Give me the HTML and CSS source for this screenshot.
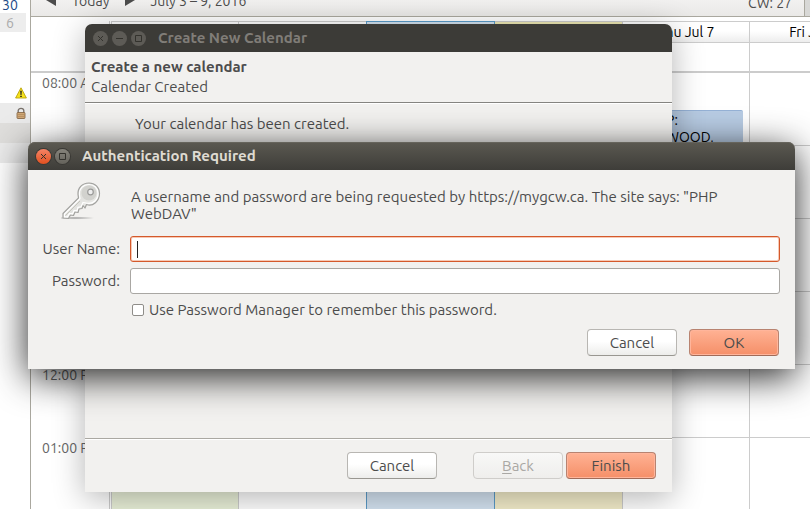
FILE: index.html
```
<!DOCTYPE html>
<html lang="en">
<head>
<meta charset="utf-8">
<title>Calendar</title>
<link rel="stylesheet" href="styles.css">
</head>
<body>
<div class="desktop">
  <aside class="sidebar">
    <div class="mini-day current">30</div>
    <div class="mini-day muted">6</div>
    <div class="gap"></div>
    <div class="cal-row">
      <svg width="12" height="12" viewBox="0 0 12 12"><path d="M6 .8 11.4 11H.6Z" fill="#f7e21c" stroke="#b9a40a" stroke-width=".9" stroke-linejoin="round"/><path d="M5.200 3.800h1.600L6.500 8h-1ZM5.200 8.700h1.600v1.300H5.200Z" fill="#222"/></svg>
    </div>
    <div class="cal-row shade-a">
      <svg width="12" height="12" viewBox="0 0 12 12"><path d="M3.200 6V3.600C3.200 .6 8.800 .6 8.800 3.600V6" fill="none" stroke="#77706a" stroke-width="1.300"/><rect x="2" y="5.500" width="8" height="6" rx=".8" fill="#d0a878" stroke="#80603e" stroke-width=".8"/><path d="M3 7.500h6M3 9.500h6" stroke="#b08858" stroke-width=".7"/></svg>
    </div>
    <div class="cal-row shade-b"></div>
    <div class="cal-row shade-c"></div>
  </aside>
  <main class="main">
    <div class="toolbar">
      <button class="flat" aria-label="Previous week"><svg width="10" height="12" viewBox="0 0 10 12"><path d="M10 0v12L0 6Z" fill="#4c4c4c"/></svg></button>
      <button class="flat today">Today</button>
      <button class="flat" aria-label="Next week"><svg width="10" height="12" viewBox="0 0 10 12"><path d="M0 0v12L10 6Z" fill="#4c4c4c"/></svg></button>
      <span class="range">July 3 – 9, 2016</span>
      <span class="week">CW: 27</span>
      <span class="edge"></span>
    </div>
    <div class="week-grid">
      <div class="times">
        <div class="corner"></div>
        <div class="hour">08:00 AM</div><div class="hour"></div><div class="hour"></div><div class="hour"></div>
        <div class="hour">12:00 PM</div><div class="hour">01:00 PM</div>
      </div>
      <div class="day sunday"><div class="day-head"></div><div class="all-day"></div><div class="cell"></div><div class="cell"></div><div class="cell"></div><div class="cell"></div><div class="cell"></div><div class="cell"></div></div>
      <div class="day"><div class="day-head"></div><div class="all-day"></div><div class="cell"></div><div class="cell"></div><div class="cell"></div><div class="cell"></div><div class="cell"></div><div class="cell"></div></div>
      <div class="day blue"><div class="day-head"></div><div class="all-day"></div><div class="cell"></div><div class="cell"></div><div class="cell"></div><div class="cell"></div><div class="cell"></div><div class="cell"></div></div>
      <div class="day yellow"><div class="day-head"></div><div class="all-day"></div><div class="cell"></div><div class="cell"></div><div class="cell"></div><div class="cell"></div><div class="cell"></div><div class="cell"></div></div>
      <div class="day"><div class="day-head">Thu Jul 7</div><div class="all-day"></div><div class="cell"><div class="event">P:<br>WOOD,</div></div><div class="cell"></div><div class="cell"></div><div class="cell"></div><div class="cell"></div><div class="cell"></div></div>
      <div class="day"><div class="day-head">Fri Jul 8</div><div class="all-day"></div><div class="cell"></div><div class="cell"></div><div class="cell"></div><div class="cell"></div><div class="cell"></div><div class="cell"></div></div>
    </div>
  </main>

  <section class="window wizard" aria-label="Create New Calendar">
    <div class="titlebar">
      <button class="ctl" aria-label="Close"><svg viewBox="0 0 15 15"><path d="m5 5 5 5m0-5-5 5"/></svg></button>
      <button class="ctl" aria-label="Minimize"><svg viewBox="0 0 15 15"><path d="M4 7.500h7"/></svg></button>
      <button class="ctl" aria-label="Maximize"><svg viewBox="0 0 15 15"><path d="M4.500 4.500h6v6h-6z"/></svg></button>
      <h2>Create New Calendar</h2>
    </div>
    <header class="wizard-head">
      <strong>Create a new calendar</strong>
      <span>Calendar Created</span>
    </header>
    <p class="wizard-body">Your calendar has been created.</p>
    <footer class="wizard-foot">
      <button class="btn first">Cancel</button>
      <button class="btn" disabled><u>B</u>ack</button>
      <button class="btn primary">Finish</button>
    </footer>
  </section>

  <section class="window auth" aria-label="Authentication Required">
    <div class="titlebar">
      <button class="ctl close" aria-label="Close"><svg viewBox="0 0 15 15"><path d="m5 5 5 5m0-5-5 5"/></svg></button>
      <button class="ctl" aria-label="Maximize"><svg viewBox="0 0 15 15"><path d="M4.500 4.500h6v6h-6z"/></svg></button>
      <h2>Authentication Required</h2>
    </div>
    <form class="auth-form">
      <svg class="key" width="40" height="40" viewBox="0 0 40 40">
        <defs>
          <linearGradient id="metal" x1="0" y1="0" x2="1" y2="1"><stop offset="0" stop-color="#d4d4d0"/><stop offset="1" stop-color="#f2f2ef"/></linearGradient>
          <radialGradient id="ground"><stop offset="0" stop-color="#777" stop-opacity=".7"/><stop offset="1" stop-color="#777" stop-opacity="0"/></radialGradient>
        </defs>
        <ellipse cx="14" cy="37" rx="20" ry="1.600" fill="url(#ground)"/>
        <path d="M28 2C21 2 16.500 7 17 13.500L17.500 17 2 32.500V37l5.500.5 2-3.500 3 .5 1.500-3.500 3 .5 1-3.500 3-.5 1-3 2 2.500 1.500-3.500C32 26 38.500 20 38.500 12.500 38.500 6 34 2 28 2Z" fill="url(#metal)" stroke="#a3a3a0" stroke-width="1.200" stroke-linejoin="round"/>
        <path d="M28 3.500C22 3.500 18 8 18.500 13.500L19 17.500 3.500 33v2.600l3 .3 2-3.400 3 .4 1.500-3.400 3 .4 1-3.600 3-.5L22 21.500 25 22C32 24 37 18.500 37 12.500 37 7 33 3.500 28 3.500Z" fill="none" stroke="#fff" stroke-width="1.200"/>
        <circle cx="28" cy="12" r="7.500" fill="#d2d2ce"/>
        <circle cx="29.500" cy="11" r="2.800" fill="#eee" stroke="#9a9a98" stroke-width="1.200"/>
        <path d="M4.500 34.500 19 20" stroke="#c5c5bd" stroke-width="1"/>
      </svg>
      <p class="message">A username and password are being requested by https://mygcw.ca. The site says: "PHP WebDAV"</p>
      <label class="name" for="user">User Name:</label>
      <input class="field" id="user" type="text" autofocus>
      <label class="name" for="pass">Password:</label>
      <input class="field" id="pass" type="password">
      <div class="remember"><input type="checkbox" id="remember"><label for="remember">Use Password Manager to remember this password.</label></div>
      <div class="actions">
        <button type="button" class="btn">Cancel</button>
        <button type="button" class="btn primary">OK</button>
      </div>
    </form>
  </section>
</div>
</body>
</html>
```
FILE: styles.css
```
* { box-sizing: border-box; }
body {
  margin: 0;
  font: 14px/20px Ubuntu, "Noto Sans", "Open Sans", sans-serif;
  color: #4c4c4c;
}
button, input { font: inherit; color: inherit; margin: 0; }
p, h2 { margin: 0; }

.desktop {
  position: relative;
  display: flex;
  height: 100vh;
  overflow: hidden;
  background: #fff;
}

/* Sidebar */
.sidebar {
  flex: none;
  width: 31px;
  border-right: 1px solid #aaa89f;
}
.mini-day { height: 19px; line-height: 20px; width: 26px; padding-left: 6px; }
.mini-day.current { height: 13px; line-height: 10px; padding-left: 2px; color: #204a87; }
.mini-day.muted { background: #ededed; color: #aaa; }
.gap { height: 51px; }
.cal-row {
  display: flex;
  align-items: center;
  justify-content: flex-end;
  height: 20px;
  padding-right: 3px;
}
.shade-a { background: #ebebeb; }
.shade-b { background: #dfdedc; }
.shade-c { background: #ebebeb; }

/* Week view */
.main { flex: 1; min-width: 0; overflow: hidden; }
.toolbar {
  display: flex;
  align-items: flex-end;
  height: 17px;
  padding-left: 15px;
  background: linear-gradient(#f2f1f0, #eae9e7);
  border-bottom: 1px solid #aaa89f;
  white-space: nowrap;
}
.flat { display: flex; padding: 0; border: 0; background: none; margin-bottom: 10px; }
.flat.today { margin: 0 16px 5px; }
.range { margin: 0 auto 5px 15px; }
.week { margin: 0 12px 3px 0; }
.edge { width: 6px; height: 16px; background: #d8d8d6; border-left: 1px solid #aaa89f; }
.week-grid {
  display: grid;
  grid-template-columns: 79px 129px repeat(3, 128px) 127px 128px;
  padding-top: 4px;
}
.times { border-right: 1px solid #ccc; }
.corner { height: 52px; border-bottom: 2px solid #ccc; }
.hour { height: 73px; padding-left: 11px; white-space: nowrap; overflow: hidden; color: #666; }
.day { border-right: 1px solid #ccc; background: #fff; }
.day-head {
  height: 22px;
  border: solid #ccc;
  border-width: 1px 0;
  background: linear-gradient(#fff 45%, #ededed);
  color: #000;
  text-align: center;
}
.all-day { height: 30px; border-bottom: 2px solid #ccc; }
.cell { height: 73px; border-bottom: 1px solid #ccc; }
.sunday { margin-left: 1px; border-left: 1px solid #ccc; background: #eaf1d9; }
.blue { border-color: #5b9bc8; background: #d5e4f2; }
.blue .day-head { border-color: #5b9bc8; background: #d3e2f0; }
.day:has(+ .blue) { border-color: #5b9bc8; }
.yellow { background: #f4eecb; }
.yellow .day-head { background: #efe9b4; }
.cell:has(.event) { display: flex; align-items: flex-end; }
.event {
  flex: 1;
  height: 35px;
  margin-right: 6px;
  padding: 1px 0 0 43px;
  border-top: 1px solid #96b2d6;
  border-radius: 2px;
  background: #b8cce4;
  color: #000;
  line-height: 17px;
}

/* Windows on the desktop */
.window {
  position: absolute;
  display: flex;
  flex-direction: column;
  border-radius: 7px 7px 0 0;
  background: #f2f1ef;
  font-size: 15px;
}
.wizard { left: 85px; right: 138px; top: 24px; bottom: 17px; box-shadow: 0 6px 32px rgba(0, 0, 0, .3); }
.auth { left: 28px; right: 15px; top: 142px; box-shadow: 0 8px 36px rgba(0, 0, 0, .85); }

.titlebar {
  display: flex;
  align-items: center;
  gap: 4px;
  height: 28px;
  padding-left: 8px;
  border-radius: 7px 7px 0 0;
}
.titlebar h2 { margin-left: 8px; font-size: 15px; font-weight: 700; }
.ctl {
  width: 15px;
  height: 15px;
  padding: 0;
  border: 0;
  border-radius: 50%;
}
.ctl svg { display: block; fill: none; stroke: #33322d; stroke-width: 1; }
.wizard .titlebar { background: #3c3b37; color: #807d78; }
.wizard .ctl { background: #5d5b56; }
.auth .titlebar {
  background: linear-gradient(#5b5951, #3e3d39);
  box-shadow: inset 0 1px #66645c;
  color: #dfdbd2;
}
.auth .ctl { background: linear-gradient(#85837b, #65635c); box-shadow: 0 0 0 1px #3a3935; }
.auth .ctl.close { background: linear-gradient(#f58466, #e2501f); }

.btn {
  width: 90px;
  height: 27px;
  padding: 0;
  border: 1px solid #b8b6b2;
  border-bottom-color: #999791;
  border-radius: 4px;
  background: linear-gradient(#fff 45%, #ededeb);
}
.btn.primary {
  border-color: #b88370;
  border-bottom-color: #a06b58;
  background: linear-gradient(#ffb294, #f58f68);
  box-shadow: inset 0 0 0 1px #ffb59b;
}
.btn:disabled { color: #aaa8a4; border-color: #cfcdca; background: linear-gradient(#f8f8f7, #efeeec); }
.btn u { text-underline-offset: 2px; }

.wizard-head {
  display: flex;
  flex-direction: column;
  padding: 5px 6px;
  border-bottom: 1px solid #858480;
}
.wizard-body { flex: 1; padding: 10px 50px; border-top: 1px solid #fff; }
.wizard-foot {
  display: flex;
  gap: 3px;
  justify-content: flex-end;
  padding: 13px 16px 13px;
  border-top: 1px solid #aaa8a2;
  box-shadow: inset 0 1px #fff;
}
.btn.first { margin-right: 33px; }

.auth-form {
  display: grid;
  grid-template-columns: 92px 1fr;
  column-gap: 10px;
  row-gap: 6px;
  align-items: center;
  padding: 11px 15px 13px 0;
}
.key { align-self: start; justify-self: end; margin-right: 19px; }
.message { max-width: 600px; margin: 7px 0 8px 1px; line-height: 17px; }
.name { text-align: right; }
.field {
  width: 100%;
  height: 26px;
  padding: 0 6px;
  border: 1px solid #a9a7a3;
  border-radius: 3px;
  background: #fff;
}
.field:focus {
  outline: none;
  border-color: #d4592b;
  box-shadow: inset 0 0 0 1px #f7c9b5;
}
#user { caret-color: transparent; }
#user:focus { background: linear-gradient(#222, #222) 6px center / 1px 17px no-repeat #fff; }
.remember { grid-column: 2; display: flex; align-items: center; gap: 5px; padding-left: 2px; }
.remember input {
  appearance: none;
  width: 12px;
  height: 12px;
  border: 1px solid #8f8d89;
  border-radius: 2px;
  background: #fff;
}
.actions { grid-column: 1 / -1; display: flex; justify-content: flex-end; gap: 12px; margin: 3px 1px 0 0; }
```
